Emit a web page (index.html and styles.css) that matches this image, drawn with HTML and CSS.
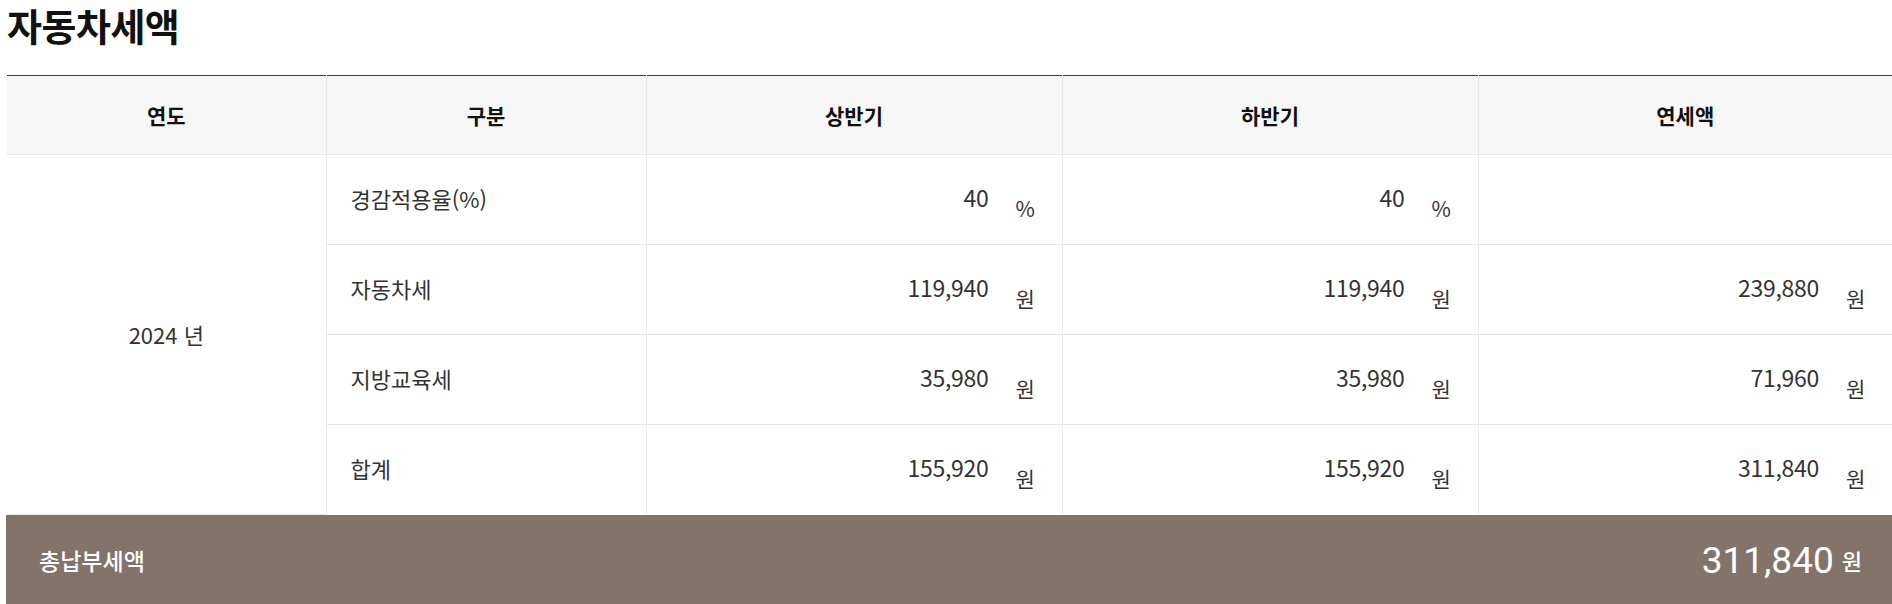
FILE: index.html
```html
<!DOCTYPE html>
<html lang="ko">
<head>
    <meta charset="UTF-8">
    <title>자동차세액</title>
    <link rel="stylesheet" href="styles.css">
</head>
<body>
    <div class="wrap">
        <h2 class="title">자동차세액</h2>

        <table class="tax-table">
            <colgroup>
                <col class="c-year">
                <col class="c-type">
                <col class="c-half">
                <col class="c-half">
                <col class="c-total">
            </colgroup>
            <thead>
                <tr>
                    <th>연도</th>
                    <th>구분</th>
                    <th>상반기</th>
                    <th>하반기</th>
                    <th>연세액</th>
                </tr>
            </thead>
            <tbody>
                <tr>
                    <td class="year" rowspan="4">2024 년</td>
                    <td class="label">경감적용율(%)</td>
                    <td class="num">40<span class="unit">%</span></td>
                    <td class="num">40<span class="unit">%</span></td>
                    <td class="num"></td>
                </tr>
                <tr>
                    <td class="label">자동차세</td>
                    <td class="num">119,940<span class="unit">원</span></td>
                    <td class="num">119,940<span class="unit">원</span></td>
                    <td class="num">239,880<span class="unit">원</span></td>
                </tr>
                <tr>
                    <td class="label">지방교육세</td>
                    <td class="num">35,980<span class="unit">원</span></td>
                    <td class="num">35,980<span class="unit">원</span></td>
                    <td class="num">71,960<span class="unit">원</span></td>
                </tr>
                <tr>
                    <td class="label">합계</td>
                    <td class="num">155,920<span class="unit">원</span></td>
                    <td class="num">155,920<span class="unit">원</span></td>
                    <td class="num">311,840<span class="unit">원</span></td>
                </tr>
            </tbody>
        </table>

        <div class="total-bar">
            <span class="total-label">총납부세액</span>
            <span class="total-value">311,840<em>원</em></span>
        </div>
    </div>
</body>
</html>
```

FILE: styles.css
```css
body {
    margin: 0;
    padding: 0;
    font-family: "Noto Sans CJK KR", "Noto Sans", sans-serif;
    color: #333;
    background: #fff;
}

.wrap {
    padding-left: 7px;
}

/* 제목 */
.title {
    margin: 0;
    height: 75px;
    font-size: 38px;
    line-height: 50px;
    font-weight: 700;
    color: #111;
    letter-spacing: -0.5px;
}

/* 세액 표 */
.tax-table {
    width: 100%;
    border-collapse: collapse;
    table-layout: fixed;
    border-top: 1px solid #3a3a3a;
}

.c-year { width: 319px; }
.c-type { width: 320px; }
.c-half { width: 416px; }
.c-total { width: auto; }

.tax-table th {
    height: 78px;
    background-color: #f7f7f7;
    font-size: 21px;
    font-weight: 700;
    color: #111;
    text-align: center;
    border-bottom: 1px solid #e6e6e6;
    border-left: 1px solid #e9e9e9;
    padding: 0;
}

.tax-table th:first-child {
    border-left: none;
}

.tax-table td {
    height: 85px;
    font-size: 22px;
    border-bottom: 1px solid #e6e6e6;
    border-left: 1px solid #ececec;
    padding: 0 0 4px 0;
}

.tax-table tbody tr:last-child td {
    border-bottom: none;
}

.tax-table td.year {
    border-left: none;
    text-align: center;
    padding-bottom: 0;
}

.tax-table td.label {
    padding-left: 24px;
}

.tax-table td.num {
    text-align: right;
    padding: 4px 24px 0 0;
    font-size: 23px;
    letter-spacing: -0.3px;
}

.unit {
    display: inline-block;
    width: 22px;
    margin-left: 27px;
    font-size: 21px;
    text-align: left;
    vertical-align: -10px;
}

/* 총납부세액 */
.total-bar {
    display: flex;
    justify-content: space-between;
    align-items: center;
    height: 92px;
    margin-left: -1px;
    padding: 0 30px 0 33px;
    background-color: #84736a;
    color: #fff;
}

.total-label {
    font-size: 23px;
    font-weight: 500;
    padding-bottom: 2px;
}

.total-value {
    font-family: Roboto, "Noto Sans CJK KR", sans-serif;
    font-size: 37px;
    font-weight: 400;
}

.total-value em {
    font-style: normal;
    font-family: "Noto Sans CJK KR", sans-serif;
    font-size: 22px;
    font-weight: 500;
    margin-left: 8px;
    vertical-align: 3px;
}
```
